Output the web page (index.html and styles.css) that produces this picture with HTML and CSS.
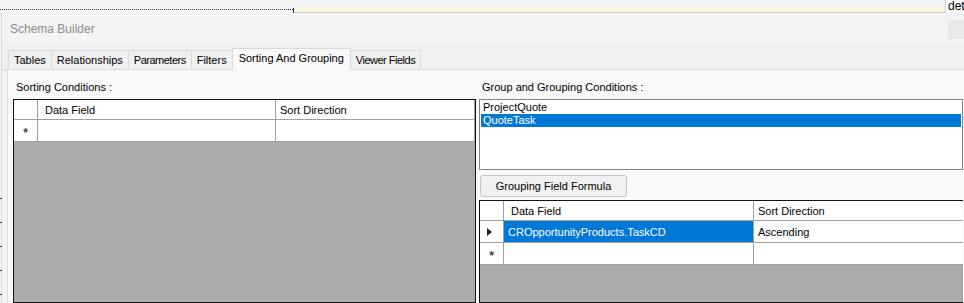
FILE: index.html
```html
<!DOCTYPE html>
<html lang="en">
<head>
    <meta charset="UTF-8">
    <title>Schema Builder</title>
    <link rel="stylesheet" href="styles.css">
</head>
<body>
    <!-- designer surface behind the dialog -->
    <div class="topstrip">
        <div class="dots"></div>
        <div class="band"></div>
        <div class="peek">det</div>
    </div>

    <div class="desk">
        <div class="ruler">
            <span></span><span></span><span></span><span></span><span></span>
        </div>

        <div class="window">
            <div class="titlebar">
                <span class="title">Schema Builder</span>
                <span class="close"></span>
            </div>

            <div class="tabs">
                <div class="tab">Tables</div>
                <div class="tab">Relationships</div>
                <div class="tab tight">Parameters</div>
                <div class="tab">Filters</div>
                <div class="tab active">Sorting And Grouping</div>
                <div class="tab tight">Viewer Fields</div>
            </div>

            <div class="panel">
                <!-- Sorting -->
                <div class="col col-left">
                    <div class="label">Sorting Conditions :</div>
                    <div class="grid grid-sort">
                        <div class="row head">
                            <div class="cell rh"></div>
                            <div class="cell c1">Data Field</div>
                            <div class="cell c2">Sort Direction</div>
                        </div>
                        <div class="row">
                            <div class="cell rh"><span class="star">*</span></div>
                            <div class="cell c1"></div>
                            <div class="cell c2"></div>
                        </div>
                        <div class="empty"></div>
                    </div>
                </div>

                <!-- Grouping -->
                <div class="col col-right">
                    <div class="label">Group and Grouping Conditions :</div>
                    <div class="listbox">
                        <div class="item">ProjectQuote</div>
                        <div class="item selected">QuoteTask</div>
                    </div>
                    <button class="btn">Grouping Field Formula</button>
                    <div class="grid grid-group">
                        <div class="row head">
                            <div class="cell rh"></div>
                            <div class="cell c1">Data Field</div>
                            <div class="cell c2">Sort Direction</div>
                        </div>
                        <div class="row">
                            <div class="cell rh"><span class="arrow"></span></div>
                            <div class="cell c1 selected">CROpportunityProducts.TaskCD</div>
                            <div class="cell c2">Ascending</div>
                        </div>
                        <div class="row">
                            <div class="cell rh"><span class="star">*</span></div>
                            <div class="cell c1"></div>
                            <div class="cell c2"></div>
                        </div>
                        <div class="empty"></div>
                    </div>
                </div>
            </div>
        </div>
    </div>
</body>
</html>
```

FILE: styles.css
```css
:root {
    --panel-bg: #f9f9f9;
    --chrome-bg: #f0f0f0;
    --select-blue: #0078d7;
    --grid-line: #a0a0a0;
    --empty-gray: #ababab;
}

* {
    box-sizing: border-box;
}

body {
    margin: 0;
    width: 964px;
    height: 303px;
    overflow: hidden;
    background: #f3f3f3;
    font-family: "Liberation Sans", Arial, sans-serif;
    font-size: 11px;
    color: #000;
}

/* top strip */
.topstrip {
    display: flex;
    height: 13px;
}

.dots {
    width: 293px;
    border-bottom: 1px dotted #333;
    height: 10px;
}

.band {
    flex: 1;
    border-left: 1px solid #222;
    margin-top: 8px;
    background: #fdf7e3;
    border-bottom: 1px solid #cfcfcf;
}

.peek {
    width: 19px;
    background: #fff;
    border-left: 1px solid #d0d0d0;
    font-size: 12px;
    line-height: 13px;
    padding-left: 2px;
    overflow: hidden;
}

/* desk */
.desk {
    display: flex;
    height: 290px;
}

.ruler {
    width: 2px;
    background: #f7f7f7;
    border-right: 1px solid #d6d6d6;
    display: flex;
    flex-direction: column;
    padding-top: 185px;
    gap: 23px;
}

.ruler span {
    display: block;
    height: 1px;
    width: 2px;
    background: #333;
}

.window {
    flex: 1;
    background: #f3f3f3;
    display: flex;
    flex-direction: column;
    min-width: 0;
}

.titlebar {
    height: 30px;
    display: flex;
    align-items: center;
    justify-content: space-between;
    padding-left: 8px;
}

.title {
    color: #8d8d8d;
    font-size: 12px;
    padding-top: 1px;
}

.close {
    width: 16px;
    height: 19px;
    background: #e8e8e8;
    margin-top: 2px;
}

/* tabs */
.tabs {
    display: flex;
    align-items: flex-end;
    height: 27px;
    background: var(--chrome-bg);
    padding-left: 6px;
    border-bottom: 1px solid #dadada;
}

.tab {
    height: 19px;
    padding: 0 5px;
    line-height: 18px;
    border: 1px solid #d9d9d9;
    border-bottom: none;
    margin-right: -1px;
    background: var(--chrome-bg);
    white-space: nowrap;
}

.tab.tight {
    letter-spacing: -0.5px;
}

.tab.active {
    height: 22px;
    line-height: 19px;
    background: var(--panel-bg);
    margin-bottom: -1px;
    padding: 0 6px;
}

/* panel */
.panel {
    flex: 1;
    display: flex;
    gap: 3px;
    background: var(--panel-bg);
    border-left: 1px solid #dadada;
    margin-left: 5px;
    padding-left: 5px;
    padding-top: 11px;
    overflow: hidden;
}

.col {
    display: flex;
    flex-direction: column;
}

.col-left {
    width: 463px;
}

.col-right {
    width: 484px;
    flex-shrink: 0;
}

.label {
    height: 18px;
    padding-left: 3px;
}

/* data grid */
.grid {
    flex: 1;
    border: 1px solid #111;
    display: flex;
    flex-direction: column;
    background: var(--empty-gray);
}

.row {
    display: flex;
    height: 22px;
    background: #fff;
}

.row.head {
    height: 20px;
}

.cell {
    border-right: 1px solid var(--grid-line);
    border-bottom: 1px solid var(--grid-line);
    padding-left: 4px;
    display: flex;
    align-items: center;
    white-space: nowrap;
}

.head .c1 {
    padding-left: 7px;
}

.cell.rh {
    width: 24px;
    justify-content: center;
    padding-left: 0;
}

.grid-sort .c1 {
    width: 238px;
}

.grid-sort .c2 {
    flex: 1;
}

.grid-group .c1 {
    width: 250px;
}

.grid-group .c2 {
    flex: 1;
    border-right: none;
}

.cell.selected {
    background: var(--select-blue);
    color: #fff;
}

.star {
    font-size: 12px;
    font-weight: bold;
    color: #444;
    line-height: 1;
    margin-top: 5px;
}

.arrow {
    width: 0;
    height: 0;
    border-top: 4px solid transparent;
    border-bottom: 4px solid transparent;
    border-left: 5px solid #222;
    margin-left: -4px;
}

.empty {
    flex: 1;
}

/* list box and button */
.listbox {
    height: 71px;
    border: 1px solid #828282;
    background: #fff;
    padding: 1px 1px;
}

.item {
    height: 13px;
    line-height: 13px;
    padding-left: 2px;
}

.item.selected {
    background: var(--select-blue);
    color: #fff;
}

.btn {
    align-self: flex-start;
    margin: 5px 0 3px 1px;
    width: 147px;
    height: 22px;
    border: 1px solid #c6c6c6;
    border-radius: 3px;
    background: #f0f0f0;
    font-family: inherit;
    font-size: 11px;
    color: #000;
    padding: 0;
}

.grid-group {
    border-right: none;
}
```
